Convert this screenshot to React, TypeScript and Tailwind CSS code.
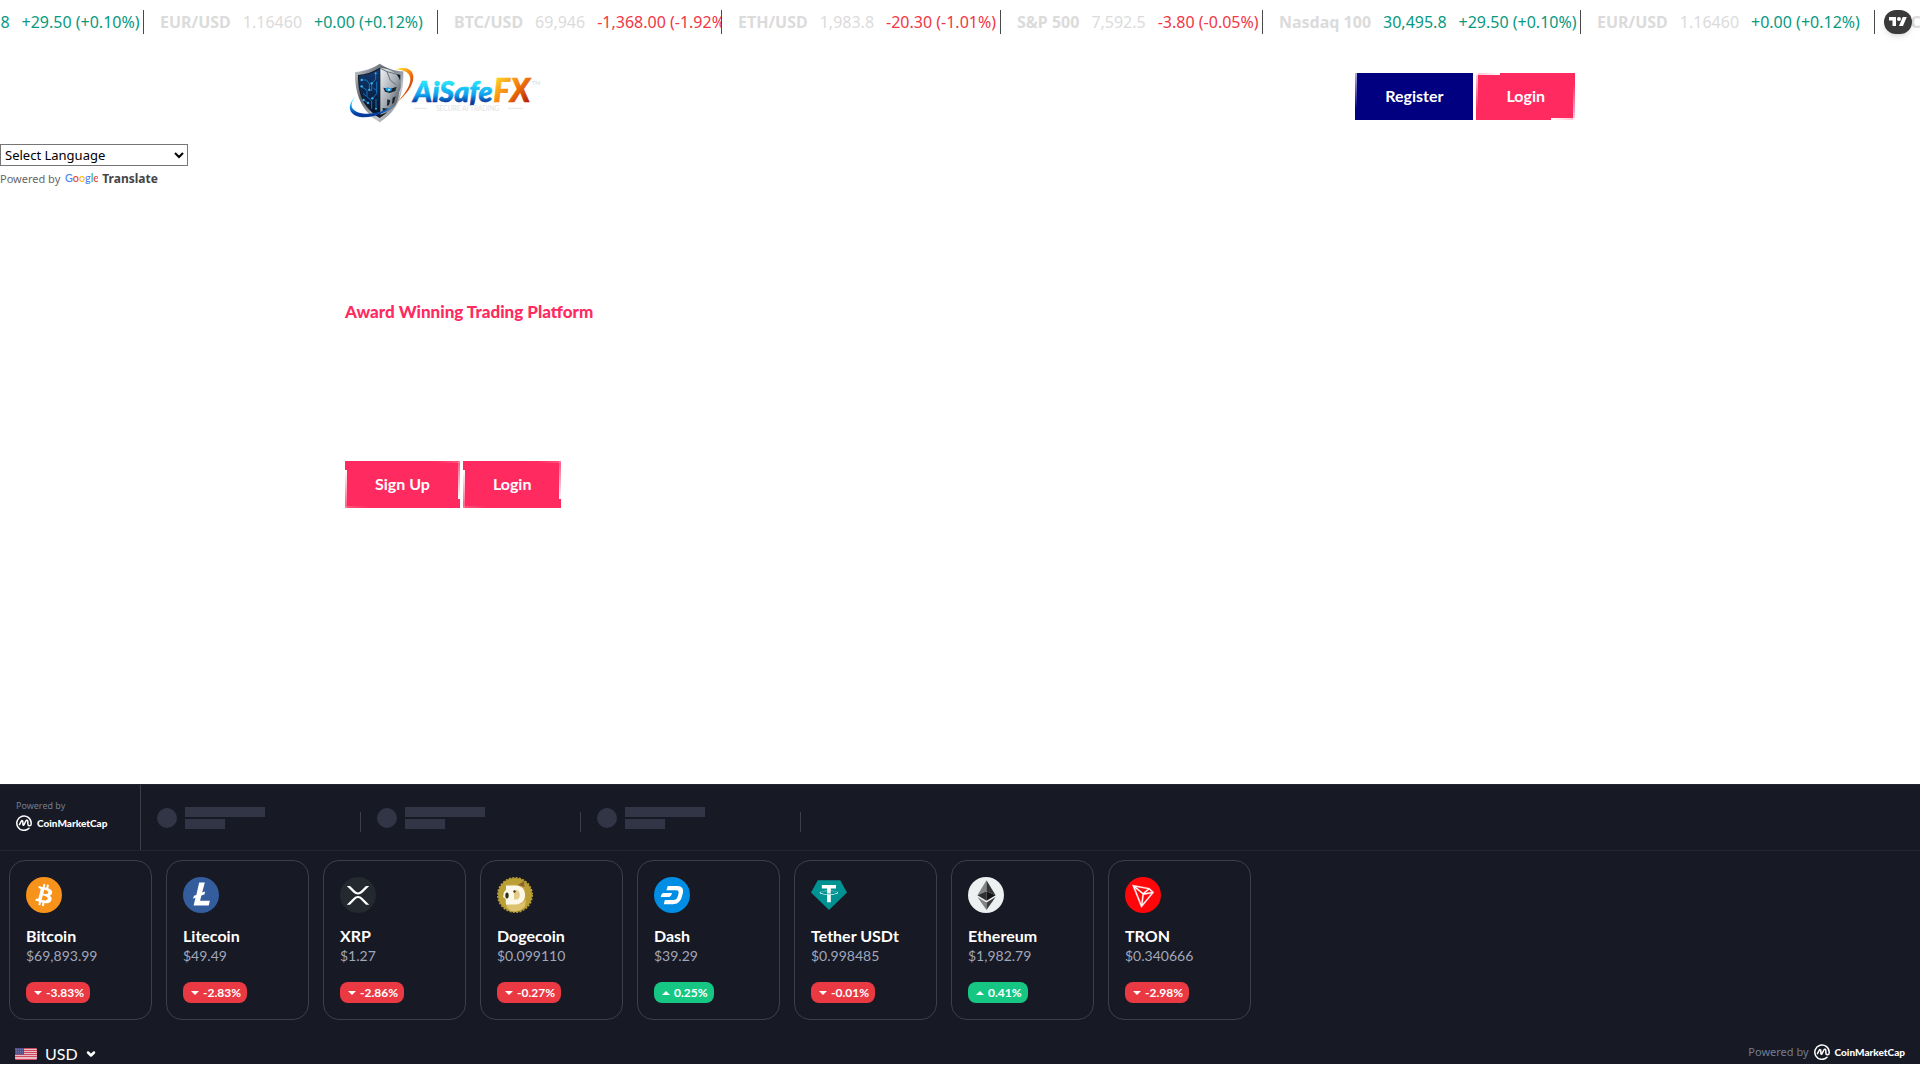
import type { ReactNode } from "react";
import { ChevronDown } from "lucide-react";

type Quote = {
  symbol: string;
  last: string;
  change: string;
  up: boolean;
  lit?: boolean;
  width: string;
};

const nasdaq: Quote = { symbol: "Nasdaq 100", last: "30,495.8", change: "+29.50 (+0.10%)", up: true, lit: true, width: "w-[318px]" };
const eurusd: Quote = { symbol: "EUR/USD", last: "1.16460", change: "+0.00 (+0.12%)", up: true, width: "w-[294px]" };
const btcusd: Quote = { symbol: "BTC/USD", last: "69,946", change: "-1,368.00 (-1.92%)", up: false, width: "w-[284px]" };
const ethusd: Quote = { symbol: "ETH/USD", last: "1,983.8", change: "-20.30 (-1.01%)", up: false, width: "w-[279px]" };
const spx: Quote = { symbol: "S&P 500", last: "7,592.5", change: "-3.80 (-0.05%)", up: false, width: "w-[262px]" };

const quotes = [nasdaq, eurusd, btcusd, ethusd, spx, nasdaq, eurusd, btcusd];

const BitcoinIcon = () => (
  <svg viewBox="0 0 32 32" className="size-9" aria-hidden="true">
    <circle cx="16" cy="16" r="16" fill="#f7931a" />
    <path
      fill="#fff"
      fillRule="evenodd"
      d="M23.189 14.02c.314-2.096-1.283-3.223-3.465-3.975l.708-2.84-1.728-.43-.69 2.765c-.454-.114-.92-.22-1.385-.326l.695-2.783L15.596 6l-.708 2.839c-.376-.086-.746-.17-1.104-.26l.002-.009-2.384-.595-.46 1.846s1.283.294 1.256.312c.7.175.826.638.805 1.006l-.806 3.235c.048.012.11.03.18.057l-.183-.045-1.13 4.532c-.086.212-.303.531-.793.41.018.025-1.256-.313-1.256-.313l-.858 1.978 2.25.561c.418.105.828.215 1.231.318l-.715 2.872 1.727.43.708-2.84c.472.127.93.245 1.378.357l-.706 2.828 1.728.43.715-2.866c2.948.558 5.164.333 6.097-2.333.752-2.146-.037-3.385-1.588-4.192 1.13-.26 1.98-1.003 2.207-2.538zm-3.95 5.538c-.533 2.147-4.148.986-5.32.695l.95-3.805c1.172.293 4.929.872 4.37 3.11zm.535-5.569c-.487 1.953-3.495.96-4.47.717l.86-3.45c.975.243 4.118.696 3.61 2.733z"
    />
  </svg>
);

const LitecoinIcon = () => (
  <svg viewBox="0 0 36 36" className="size-9" aria-hidden="true">
    <circle cx="18" cy="18" r="18" fill="#345d9d" />
    <path fill="#fff" d="M16.2 5.6h5.6L19.2 15.6l3-1.1-.8 2.9-3 1.1-1.3 5.2h9.8l-1.2 4.9H10.6l1.9-7.8-2.4.9.8-2.9 2.4-.9z" />
  </svg>
);

const XrpIcon = () => (
  <svg viewBox="0 0 32 32" className="size-9" aria-hidden="true">
    <circle cx="16" cy="16" r="16" fill="#23292f" />
    <path
      fill="#fff"
      d="M23.07 8h2.89l-6.015 5.957a5.621 5.621 0 01-7.89 0L6.035 8H8.93l4.57 4.523a3.556 3.556 0 004.996 0L23.07 8zM8.895 24.563H6l6.055-5.993a5.621 5.621 0 017.89 0L26 24.562h-2.895L18.5 20a3.556 3.556 0 00-4.996 0l-4.61 4.563z"
    />
  </svg>
);

const DogecoinIcon = () => (
  <svg viewBox="0 0 36 36" className="size-9" aria-hidden="true">
    <circle cx="18" cy="18" r="17" fill="#ba9f33" />
    <circle cx="18" cy="18" r="17.3" fill="none" stroke="#ba9f33" strokeWidth="1.4" strokeDasharray="2 1.4" />
    <path fill="#dcc26f" d="M8 23c2-2 18-2 21 0l-1 6c-3 4-7 5.500-11 5.500-5 0-8-4-9-11.500z" />
    <path fill="#c8a24a" d="M10 9l6-2 6 1 5-4 1 8 1 11-5 4H10l-3-8z" />
    <path fill="#8b6430" d="M21 8l6-4 .5 6z" />
    <path fill="#e3cb8a" d="M9 12c4-4 12-4 15-1l1 12-5 4-9-1-4-6z" />
    <path
      fill="#fbf7e9"
      fillRule="evenodd"
      d="M9 8.500h9.500c6 0 9.500 3.500 9.500 9.500s-3.500 9.500-9.500 9.500H9V22l-3-2 1-5 2-2zM17 13v9.500h2c2.500 0 3.800-1.600 3.800-4.500s-1.300-5-3.800-5z"
    />
    <ellipse cx="10" cy="18.500" rx="1.700" ry="3" fill="#33301f" />
    <circle cx="17.500" cy="14.500" r="1.200" fill="#4b3c20" />
  </svg>
);

const DashIcon = () => (
  <svg viewBox="0 0 36 36" className="size-9" aria-hidden="true">
    <circle cx="18" cy="18" r="18" fill="#008de4" />
    <path fill="#fff" d="M13.700 9h9.800c4.500 0 6.500 3 5.300 7.500l-1 3.500c-1.300 4.700-4.500 7.200-9 7.200H9.700l1.200-4.200h8.500c2.200 0 3.500-1 4.200-3.300l.8-2.800c.7-2.400 0-3.700-2.200-3.700h-9.800z" />
    <path fill="#fff" d="M9.200 16.100h8.700c-.4 2.500-1.500 3.900-3.700 3.900H6.800c.4-2.400 1.200-3.500 2.400-3.900z" />
  </svg>
);

const TetherIcon = () => (
  <svg viewBox="0 0 36 36" className="size-9" aria-hidden="true">
    <path fill="#009393" d="M6.800 3.200h22.400L36 15.400 18 33 0 15.400z" />
    <g transform="translate(2.600 .3) scale(.96 .97)">
      <path
        fill="#fff"
        d="M17.922 17.383v-.002c-.11.008-.677.042-1.942.042-1.01 0-1.721-.03-1.971-.042v.003c-3.888-.171-6.79-.848-6.79-1.658 0-.809 2.902-1.486 6.79-1.66v2.644c.254.018.982.061 1.988.061 1.207 0 1.812-.05 1.925-.06v-2.643c3.88.173 6.775.85 6.775 1.658 0 .81-2.895 1.485-6.775 1.657m0-3.59v-2.366h5.414V7.819H8.595v3.608h5.414v2.365c-4.4.202-7.709 1.074-7.709 2.118 0 1.044 3.309 1.915 7.709 2.118v7.582h3.913v-7.584c4.393-.202 7.694-1.073 7.694-2.116 0-1.043-3.301-1.914-7.694-2.117"
      />
    </g>
  </svg>
);

const EthereumIcon = () => (
  <svg viewBox="0 0 36 36" className="size-9" aria-hidden="true">
    <circle cx="18" cy="18" r="18" fill="#ecf0f1" />
    <path fill="#828384" d="M18.500 3.200L9.400 18.300l9.100-4.100z" />
    <path fill="#343434" d="M18.500 3.200v11l9.100 4.100z" />
    <path fill="#2f3030" d="M9.400 18.300l9.100-4.100v9.500z" />
    <path fill="#131313" d="M27.600 18.300l-9.100-4.100v9.500z" />
    <path fill="#828384" d="M9.400 20.100l9.100 5.300v7.600z" />
    <path fill="#3c3c3b" d="M27.600 20.100l-9.100 5.300v7.600z" />
  </svg>
);

const TronIcon = () => (
  <svg viewBox="0 0 32 32" className="size-9" aria-hidden="true">
    <circle cx="16" cy="16" r="16" fill="#ff060a" />
    <path
      fill="#fff"
      stroke="#fff"
      strokeWidth=".3"
      transform="translate(-1.300 -.5) scale(1.050)"
      d="M21.932 9.913L7.5 7.257l7.595 19.112 10.583-12.894-3.746-3.562zm-.232 1.17l2.208 2.099-6.038 1.093 3.83-3.192zm-5.142 2.973l-6.364-5.278 10.402 1.914-4.038 3.364zm-.453.934l-1.038 8.58L9.472 9.487l6.633 5.502zm.96.455l6.687-1.21-7.67 9.343.983-8.133z"
    />
  </svg>
);

const coins: { name: string; price: string; change: string; up: boolean; icon: ReactNode }[] = [
  { name: "Bitcoin", price: "$69,893.99", change: "-3.83%", up: false, icon: <BitcoinIcon /> },
  { name: "Litecoin", price: "$49.49", change: "-2.83%", up: false, icon: <LitecoinIcon /> },
  { name: "XRP", price: "$1.27", change: "-2.86%", up: false, icon: <XrpIcon /> },
  { name: "Dogecoin", price: "$0.099110", change: "-0.27%", up: false, icon: <DogecoinIcon /> },
  { name: "Dash", price: "$39.29", change: "0.25%", up: true, icon: <DashIcon /> },
  { name: "Tether USDt", price: "$0.998485", change: "-0.01%", up: false, icon: <TetherIcon /> },
  { name: "Ethereum", price: "$1,982.79", change: "0.41%", up: true, icon: <EthereumIcon /> },
  { name: "TRON", price: "$0.340666", change: "-2.98%", up: false, icon: <TronIcon /> },
];

const Logo = () => (
  <svg viewBox="45 28 600 222" className="h-[74px] w-[200px]" role="img" aria-label="AiSafeFX">
    <defs>
      <linearGradient id="steel" x1="0" y1="0" x2="1" y2="1">
        <stop offset="0" stopColor="#d5dae0" />
        <stop offset=".35" stopColor="#59616c" />
        <stop offset=".7" stopColor="#c5cad0" />
        <stop offset="1" stopColor="#3a414a" />
      </linearGradient>
      <linearGradient id="navy" x1="0" y1="0" x2="0" y2="1">
        <stop offset="0" stopColor="#123a72" />
        <stop offset="1" stopColor="#041228" />
      </linearGradient>
      <linearGradient id="face" x1="0" y1="0" x2="1" y2="1">
        <stop offset="0" stopColor="#f4f5f6" />
        <stop offset=".5" stopColor="#a4abb2" />
        <stop offset="1" stopColor="#2b3138" />
      </linearGradient>
      <linearGradient id="blue" x1="0" y1="0" x2="0" y2="1">
        <stop offset=".2" stopColor="#27e0fa" />
        <stop offset=".55" stopColor="#0f86e6" />
        <stop offset=".85" stopColor="#063a9c" />
      </linearGradient>
      <linearGradient id="word" x1="0" y1="0" x2="0" y2="1">
        <stop offset=".25" stopColor="#27e0fa" />
        <stop offset=".6" stopColor="#0fa0f0" />
        <stop offset=".82" stopColor="#063a9c" />
      </linearGradient>
      <linearGradient id="fire" x1="0" y1="0" x2="1" y2="1">
        <stop offset=".1" stopColor="#ffd92b" />
        <stop offset=".5" stopColor="#f57a0a" />
        <stop offset=".9" stopColor="#b01205" />
      </linearGradient>
    </defs>
    <path d="M75 64c28-3 52-10 74-25 22 15 45 22 71 23 2 62-12 116-71 153C92 180 74 126 75 64z" fill="url(#steel)" />
    <path d="M84 73c24-3 46-9 65-22 20 13 40 19 62 21 1 54-12 99-62 130-50-30-66-75-65-129z" fill="#151b23" />
    <path d="M87 76c22-3 44-9 62-21v142c-46-28-62-71-62-121z" fill="url(#navy)" />
    <path d="M151 52c21 0 47 11 56 30 9 18 6 31 0 43-2 20-7 37-17 45l-16 14-23 8z" fill="url(#face)" />
    <path d="M160 111l20 4 20-7-4 13-17 6-14-4zM172 146l9 3-4 14-6 3zM188 141l9-4-5 19-6 4zM158 172l18 2-9 8-9 2z" fill="#1c242d" />
    <path d="M151 53l20 10 10 26 17 13M171 63l26 7" fill="none" stroke="#657080" strokeWidth="3" />
    <path d="M165 114c8-6 16-3 22 4-8 7-17 6-22-4z" fill="#129ceb" />
    <circle cx="177" cy="117" r="3" fill="#b6f5ff" />
    <path
      d="M95 88h14l9 11v19M94 107l17 12v19l14 13v23M137 68v18l-12 12v23M140 93v36l-13 14M99 128l10 9M101 148l13 9M138 145v29M130 112l10 8"
      fill="none"
      stroke="#1587d6"
      strokeWidth="2.500"
    />
    <g fill="#35b8f5">
      <circle cx="95" cy="88" r="3.500" />
      <circle cx="95" cy="107" r="3.500" />
      <circle cx="125" cy="98" r="3.500" />
      <circle cx="118" cy="118" r="3.500" />
      <circle cx="101" cy="148" r="3.500" />
      <circle cx="127" cy="143" r="3.500" />
      <circle cx="114" cy="157" r="3.500" />
      <circle cx="138" cy="174" r="3" />
      <circle cx="137" cy="68" r="3" />
    </g>
    <path d="M197 56c30-10 53 0 53 24 0 26-22 53-48 74 18-20 37-43 39-66 1-20-15-30-44-32z" fill="url(#fire)" />
    <path d="M78 137c-17 19-19 36 2 46 28 13 77 5 112-19-36 33-92 45-119 29-22-13-15-39 5-56z" fill="url(#blue)" />
    <g fontFamily="Lato, sans-serif" fontWeight="900" fontStyle="italic">
      <text x="250" y="155" fontSize="86" fill="url(#word)" stroke="url(#word)" strokeWidth="2">AiSafe</text>
      <text x="490" y="155" fontSize="94" fill="url(#fire)" stroke="url(#fire)" strokeWidth="2">FX</text>
    </g>
    <text x="606" y="103" fontFamily="Lato, sans-serif" fontSize="17" fill="#d8d8da">TM</text>
    <path d="M252 173h40M534 173h46" stroke="#ddd5d5" strokeWidth="2" />
    <text x="413" y="180" textAnchor="middle" fontFamily="Lato, sans-serif" fontSize="20" fill="#e2e2e4">SECURE AI TRADING</text>
  </svg>
);

const CoinMarketCap = () => (
  <a href="#coinmarketcap" className="flex items-center gap-[5px] text-white">
    <svg viewBox="0 0 48 48" className="size-4" fill="none" stroke="currentColor" strokeWidth="4.500" strokeLinecap="round" strokeLinejoin="round" aria-hidden="true">
      <path d="M39 40A21.500 21.500 0 1 1 45.500 24v3c0 7-10 7-10 0v-6c0-6-4-7-6-3l-5 10c-2 4-4 3-4-1v-7c0-4-3-4-5-1l-5 10" />
    </svg>
    <span className="font-[Lato] text-[10px] leading-4 font-black">CoinMarketCap</span>
  </a>
);

const TickerItem = ({ quote }: { quote: Quote }) => (
  <div className={`flex h-6 shrink-0 items-center gap-3 overflow-hidden border-r border-[#4a4a4a] pl-4 text-base whitespace-nowrap ${quote.width}`}>
    <span className="font-bold text-[#dbdbdb]">{quote.symbol}</span>
    <span className={quote.lit ? "text-[#089981]" : "text-[#dbdbdb]"}>{quote.last}</span>
    <span className={quote.up ? "text-[#089981]" : "text-[#f23645]"}>{quote.change}</span>
  </div>
);

const TickerTape = () => (
  <div className="relative flex h-11 items-center overflow-hidden">
    <div className="-ml-[174px] flex">
      {quotes.map((quote, i) => (
        <TickerItem key={i} quote={quote} />
      ))}
    </div>
    <a href="#tradingview" aria-label="TradingView" className="absolute top-[10px] right-2 flex h-6 w-7 items-center justify-center rounded-full bg-[#3a3a3a] shadow-md">
      <svg viewBox="0 0 36 28" className="h-4 w-[18px]" fill="#fff" aria-hidden="true">
        <path d="M14 22H7V11H0V4h14v18zM28 22h-8l7.500-18h8L28 22z" />
        <circle cx="20" cy="8" r="4" />
      </svg>
    </a>
  </div>
);

// The four edge strips are the hover border caught between its two states.
const BrandButton = ({ children, variant = "hero" }: { children: ReactNode; variant?: "navy" | "header" | "hero" }) => (
  <a
    href="#account"
    className={`relative flex h-[47px] items-center px-[30px] pb-0.5 font-[Lato] text-base font-bold text-white ${variant === "navy" ? "bg-[#000080]" : "bg-[#ff2a5f]"}`}
  >
    {variant === "navy" && <span className="absolute top-0 left-0 h-9 w-0.5 bg-linear-to-b from-white/70 to-transparent" />}
    {variant === "header" && (
      <>
        <span className="absolute top-0 left-0 h-0.5 w-6 bg-linear-to-r from-white/70 to-white" />
        <span className="absolute top-0 left-0 h-9 w-0.5 bg-linear-to-b from-white/80 to-transparent" />
        <span className="absolute right-0 bottom-0 h-0.5 w-6 bg-linear-to-l from-white/70 to-white" />
        <span className="absolute right-0 bottom-0 h-9 w-0.5 bg-linear-to-t from-white/80 to-transparent" />
      </>
    )}
    {variant === "hero" && (
      <>
        <span className="absolute top-[9px] bottom-0 left-0 w-0.5 bg-linear-to-b from-white to-white/20" />
        <span className="absolute top-0 right-0 bottom-[9px] w-0.5 bg-linear-to-t from-white to-white/20" />
        <span className="absolute top-0 right-0 h-0.5 w-6 bg-linear-to-l from-white/20 to-transparent" />
        <span className="absolute bottom-0 left-0 h-0.5 w-6 bg-linear-to-r from-white/20 to-transparent" />
      </>
    )}
    {children}
  </a>
);

const Translate = () => (
  <div className="text-[11px] text-[#666]">
    <select aria-label="Language Translate Widget" className="block h-[22px] w-[188px] border border-[#767676] bg-white text-[13px] text-black">
      <option>Select Language</option>
    </select>
    <div className="flex items-center gap-[5px] pt-1 leading-[18px]">
      <span>Powered by</span>
      <a href="#translate" className="flex items-center gap-1 text-xs leading-[18px] font-bold text-[#444]">
        <svg viewBox="0 0 66 24" className="h-3 w-[33px]" role="img" aria-label="Google">
          <text x="0" y="17" fontFamily="Lato, sans-serif" fontWeight="500" fontSize="21.500">
            <tspan fill="#4285f4">G</tspan>
            <tspan fill="#ea4335">o</tspan>
            <tspan fill="#fbbc05">o</tspan>
            <tspan fill="#4285f4">g</tspan>
            <tspan fill="#34a853">l</tspan>
            <tspan fill="#ea4335">e</tspan>
          </text>
        </svg>
        Translate
      </a>
    </div>
  </div>
);

const Skeleton = () => (
  <div className="flex h-[65px] w-[220px] items-center justify-between">
    <div className="flex items-center gap-2 pl-4">
      <div className="size-5 rounded-full bg-[#323546]" />
      <div className="flex flex-col gap-0.5">
        <div className="h-[10px] w-20 bg-[#323546]" />
        <div className="h-[10px] w-10 bg-[#323546]" />
      </div>
    </div>
    <div className="mt-2 h-5 w-px bg-[#3c3f4c]" />
  </div>
);

const Flag = () => (
  <svg viewBox="0 0 22 12" className="h-3 w-[22px] rounded-xs" preserveAspectRatio="none" aria-hidden="true">
    <rect width="22" height="12" fill="#e9bcc5" />
    <path d="M0 .500h22M0 2.500h22M0 4.500h22M0 6.500h22M0 8.500h22M0 11.500h22" stroke="#cf4a5c" />
    <rect width="9" height="6.500" fill="#4d4f8a" />
    <path d="M1 1.500h7M1 3.500h7M1 5.200h7" stroke="#8587b5" strokeWidth=".7" strokeDasharray="1 1" />
  </svg>
);

const MarketPanel = () => (
  <section className="border-t border-[#222531] bg-[#171924] font-[Lato] text-white">
    <div className="flex border-b border-[#222531]">
      <div className="flex w-[141px] flex-col gap-1 border-r border-[#3c3f4c] pt-4 pl-4">
        <span className="font-['Noto_Sans'] text-[9px] leading-[10px] text-[#747d90]">Powered by</span>
        <CoinMarketCap />
      </div>
      <Skeleton />
      <Skeleton />
      <Skeleton />
    </div>
    <ul className="flex flex-wrap gap-[14px] px-[9px] pt-[9px]">
      {coins.map((coin) => (
        <li key={coin.name} className="flex h-40 w-[143px] flex-col items-start rounded-2xl border border-[#3c3f4c] p-4">
          {coin.icon}
          <h3 className="mt-[11px] text-base leading-6 font-bold">{coin.name}</h3>
          <p className="text-sm leading-4 text-[#a1a7bb]">{coin.price}</p>
          <span className={`mt-[18px] flex h-[21px] items-center gap-1 rounded-lg pr-1.5 pl-2 text-xs font-bold ${coin.up ? "bg-[#16c784]" : "bg-[#ea3943]"}`}>
            <svg viewBox="0 0 8 4" className="h-1 w-2" fill="currentColor" aria-hidden="true">
              <path d={coin.up ? "M0 4L4 0l4 4z" : "M0 0l4 4 4-4z"} />
            </svg>
            {coin.change}
          </span>
        </li>
      ))}
    </ul>
    <div className="flex h-11 items-end justify-between px-[15px]">
      <label className="flex items-center gap-2">
        <Flag />
        <span className="relative flex items-center">
          <select aria-label="Currency" className="w-14 appearance-none bg-transparent text-base leading-5">
            <option>USD</option>
          </select>
          <ChevronDown className="pointer-events-none absolute right-1 size-3" strokeWidth={5} />
        </span>
      </label>
      <div className="flex items-center gap-[5px] pb-1">
        <span className="font-['Noto_Sans'] text-[11px] leading-4 text-[#747d90]">Powered by</span>
        <CoinMarketCap />
      </div>
    </div>
  </section>
);

export default function App() {
  return (
    <div className="min-h-screen bg-white font-['Noto_Sans']">
      <TickerTape />
      <header className="mx-auto flex h-[100px] max-w-[1230px] items-center justify-between pt-[5px]">
        <a href="#home">
          <Logo />
        </a>
        <nav className="flex gap-[3px]">
          <BrandButton variant="navy">Register</BrandButton>
          <BrandButton variant="header">Login</BrandButton>
        </nav>
      </header>
      <Translate />
      <main>
        <section className="mx-auto flex h-[596px] max-w-[1230px] flex-col items-start pt-28">
          <h1 className="font-[Lato] text-[17px] leading-6 font-black text-[#ff2a5f]">Award Winning Trading Platform</h1>
          <div className="mt-[137px] flex gap-[3px]">
            <BrandButton>Sign Up</BrandButton>
            <BrandButton>Login</BrandButton>
          </div>
        </section>
        <MarketPanel />
      </main>
    </div>
  );
}
